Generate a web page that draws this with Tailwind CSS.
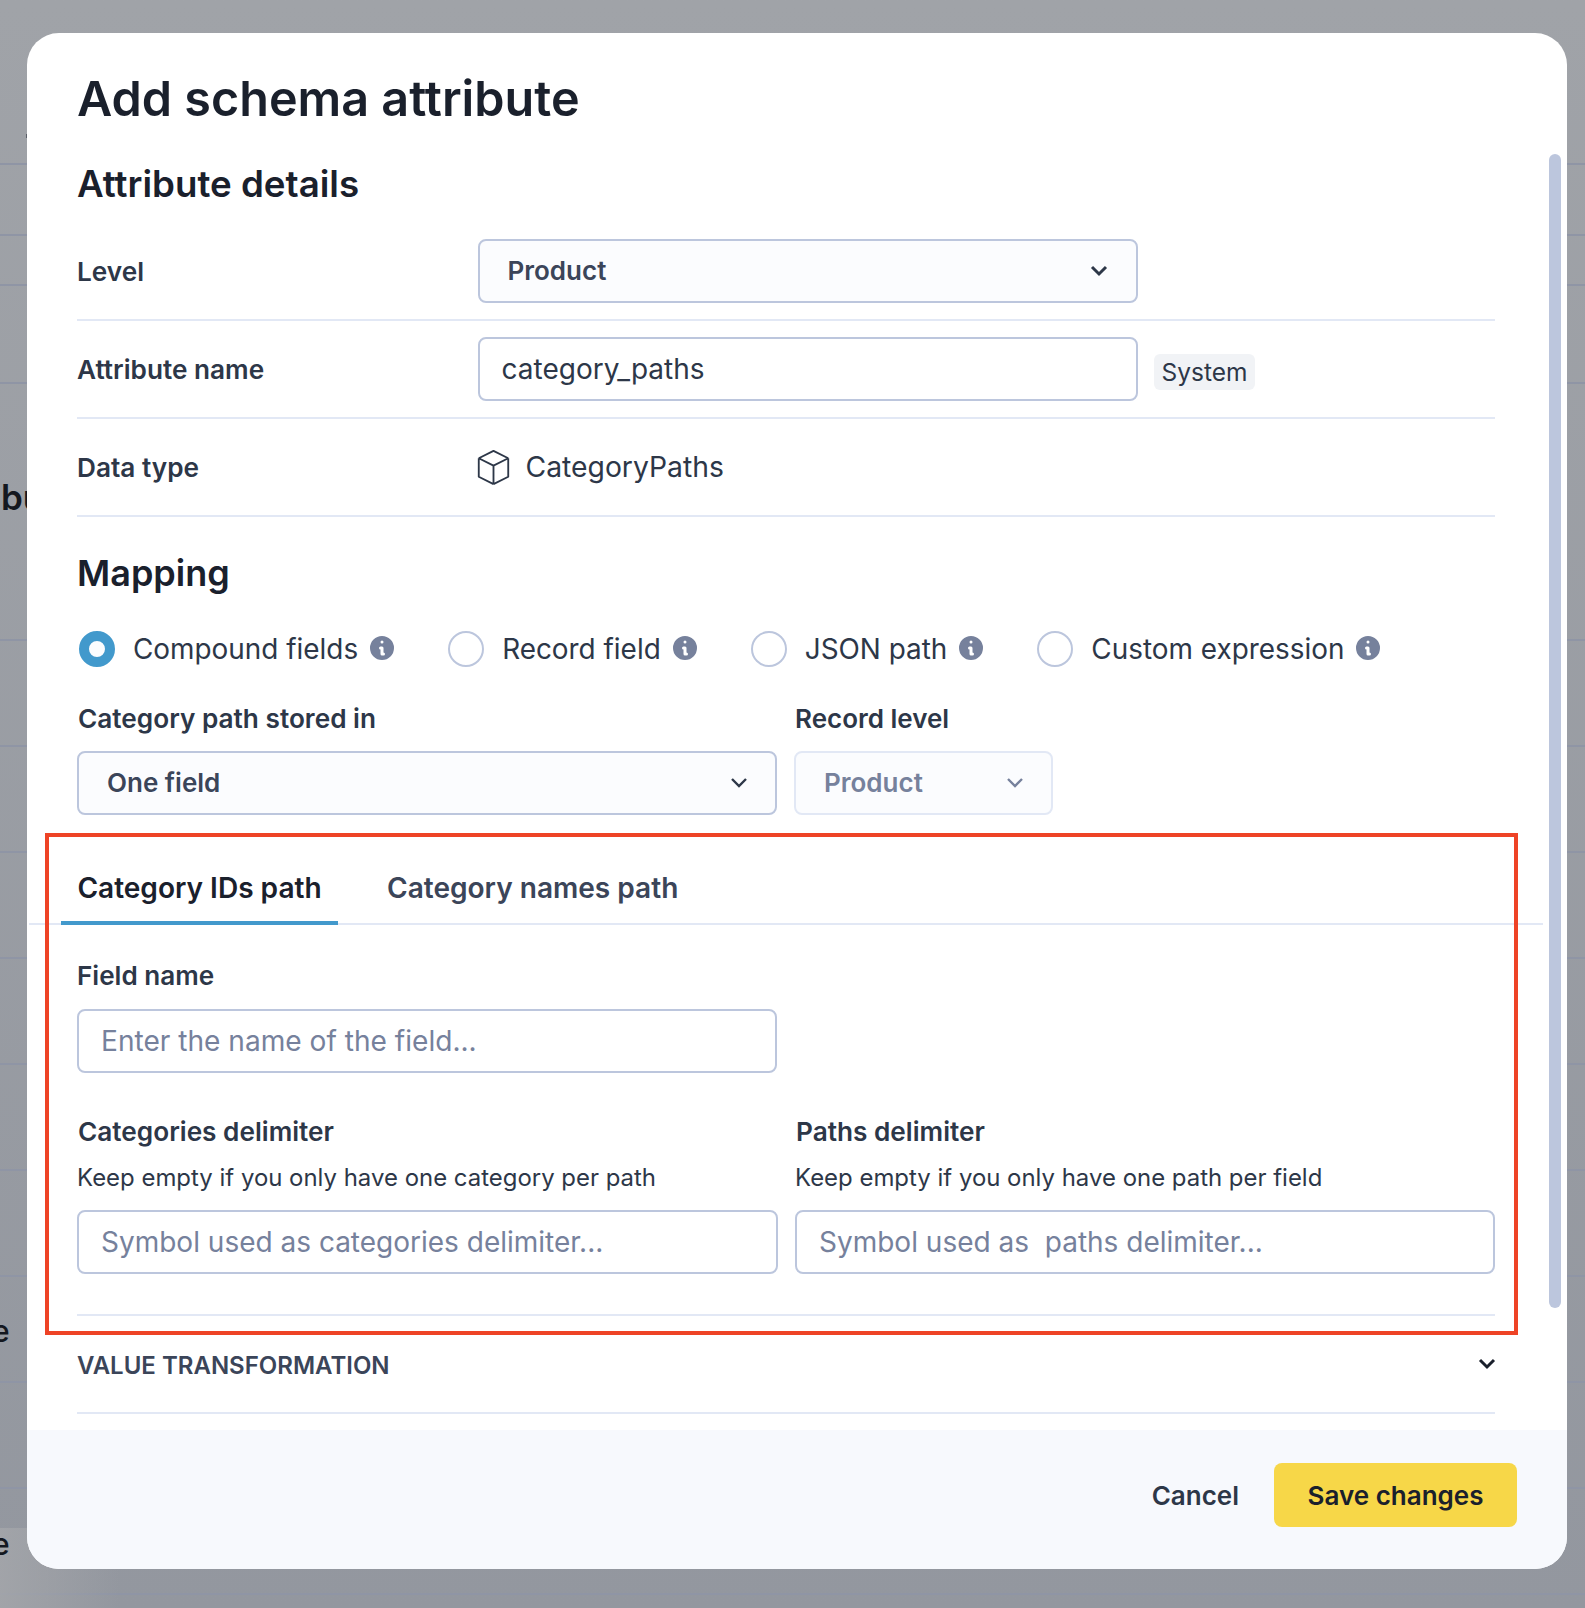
<!DOCTYPE html>
<html lang="en">
<head>
<meta charset="utf-8">
<title>Add schema attribute</title>
<script src="https://cdn.jsdelivr.net/npm/@tailwindcss/browser@4"></script>
</head>
<body class="m-0 bg-[#9ea1a7]">
<div class="relative w-[1585px] h-[1608px] overflow-hidden bg-gradient-to-b from-[#a0a3a8] to-[#93979f] font-['Inter',sans-serif]">
  <!-- page dimmed behind the dialog -->
  <div class="absolute inset-0">
    <div class="h-[165px] border-b-2 border-[#8f95a5]"></div>
    <div class="h-[71px] border-b-2 border-[#8f95a5]"></div>
    <div class="h-[50px] border-b-2 border-[#8f95a5]"></div>
    <div class="h-[98px] border-b-2 border-[#8f95a5]"></div>
    <div class="h-[257px] border-b-2 border-[#8f95a5]"></div>
    <div class="h-[106px] border-b-2 border-[#8f95a5]"></div>
    <div class="h-[106px] border-b-2 border-[#8f95a5]"></div>
    <div class="h-[106px] border-b-2 border-[#8f95a5]"></div>
    <div class="h-[106px] border-b-2 border-[#8f95a5]"></div>
    <div class="h-[106px] border-b-2 border-[#8f95a5]"></div>
    <div class="h-[106px] border-b-2 border-[#8f95a5]"></div>
    <div class="h-[106px] border-b-2 border-[#8f95a5]"></div>
    <div class="h-[106px] border-b-2 border-[#8f95a5]"></div>
    <div class="h-[106px] border-b-2 border-[#8f95a5]"></div>
  </div>
  <div class="absolute left-0 bottom-0 w-[120px] h-[80px] bg-gradient-to-r from-[#a5a7ab]/80 to-transparent"></div>
  <span class="absolute left-[26px] top-[134px] w-[1px] h-[4px] bg-[#5a5f68]"></span>
  <span class="absolute left-[1px] top-[476px] text-[35px] leading-[42px] font-semibold text-[#141820]">bu</span>
  <span class="absolute left-[-8px] top-[1313px] text-[30px] leading-[36px] font-medium text-[#141820]">e</span>
  <span class="absolute left-[-8px] top-[1526px] text-[30px] leading-[36px] font-medium text-[#141820]">e</span>

  <!-- dialog -->
  <div class="absolute left-[27px] top-[33px] w-[1540px] h-[1536px] rounded-[32px] bg-white overflow-hidden flex flex-col">
    <div class="h-[1397px] shrink-0 pl-[50px] pr-[72px]">
      <h1 class="mt-[38px] h-[56px] leading-[56px] text-[48.5px] font-semibold text-[#1a202c]">Add schema attribute</h1>
      <h2 class="mt-[37px] h-[40px] leading-[40px] text-[36.7px] font-semibold text-[#1a202c]">Attribute details</h2>

      <div class="mt-[19px]">
        <div class="h-[98px] box-border border-b-2 border-[#e2e8f5] flex items-center">
          <div class="w-[400.5px] shrink-0 pt-[2px] text-[26.2px] font-semibold text-[#2d3748]">Level</div>
          <button class="w-[660px] h-[64px] box-border pl-[28px] pr-[28px] flex items-center justify-between rounded-[8px] border-2 border-[#bcc6dd] bg-[#fbfcfe] text-[26px] font-semibold text-[#3b4559]">
            <span class="-mt-[2px]">Product</span>
            <svg class="w-[18px] h-[12px]" viewBox="0 0 18 12" fill="none" stroke="#2d3748" stroke-width="3"><path d="M2 2l7 7 7-7"/></svg>
          </button>
        </div>
        <div class="h-[98px] box-border border-b-2 border-[#e2e8f5] flex items-center">
          <div class="w-[400.5px] shrink-0 pt-[2px] text-[26.2px] font-semibold text-[#2d3748]">Attribute name</div>
          <input class="w-[660px] h-[64px] box-border px-[22px] rounded-[8px] border-2 border-[#bcc6dd] bg-white text-[28px] text-[#2d3748] outline-none" value="category_paths">
          <span class="ml-[16px] mt-[6px] h-[36px] leading-[36px] px-[8px] rounded-[6px] bg-[#f1f3f6] text-[24.5px] text-[#2d3748]">System</span>
        </div>
        <div class="h-[98px] box-border border-b-2 border-[#e2e8f5] flex items-center">
          <div class="w-[400.5px] shrink-0 pt-[2px] text-[26.2px] font-semibold text-[#2d3748]">Data type</div>
          <svg class="-ml-[2px] w-[35px] h-[35px] shrink-0" viewBox="3 2.5 18 19" fill="none" stroke="#2d3748" stroke-width="1" stroke-linejoin="round"><path d="M20 7l-8-4-8 4m16 0l-8 4m8-4v10l-8 4m0-10L4 7m8 4v10M4 7v10l8 4"/></svg>
          <span class="ml-[15px] text-[28.3px] text-[#2d3748]">CategoryPaths</span>
        </div>
      </div>

      <h2 class="mt-[36px] h-[40px] leading-[40px] text-[36px] font-semibold text-[#1a202c]">Mapping</h2>

      <div class="mt-[38px] ml-[2px] h-[36px] flex items-center">
        <span class="w-[36px] h-[36px] box-border rounded-full border-[10px] border-[#4299cc] bg-[#fbfcfe] shrink-0"></span>
        <span class="ml-[18px] pt-[2px] text-[27.9px] text-[#2d3748]">Compound fields</span>
        <svg class="ml-[12px] w-[24px] h-[24px] shrink-0 -mt-[2px]" viewBox="2 2 16 16" fill="#76819c"><path fill-rule="evenodd" d="M18 10a8 8 0 11-16 0 8 8 0 0116 0zm-7-4a1 1 0 11-2 0 1 1 0 012 0zM9 9a1 1 0 000 2v3a1 1 0 001 1h1a1 1 0 100-2v-3a1 1 0 00-1-1H9z"/></svg>
        <span class="ml-[54px] w-[36px] h-[36px] box-border rounded-full border-2 border-[#bcc6dd] bg-white shrink-0"></span>
        <span class="ml-[18px] pt-[2px] text-[27.9px] text-[#2d3748]">Record field</span>
        <svg class="ml-[12px] w-[24px] h-[24px] shrink-0 -mt-[2px]" viewBox="2 2 16 16" fill="#76819c"><path fill-rule="evenodd" d="M18 10a8 8 0 11-16 0 8 8 0 0116 0zm-7-4a1 1 0 11-2 0 1 1 0 012 0zM9 9a1 1 0 000 2v3a1 1 0 001 1h1a1 1 0 100-2v-3a1 1 0 00-1-1H9z"/></svg>
        <span class="ml-[54px] w-[36px] h-[36px] box-border rounded-full border-2 border-[#bcc6dd] bg-white shrink-0"></span>
        <span class="ml-[18px] pt-[2px] text-[27.9px] text-[#2d3748]">JSON path</span>
        <svg class="ml-[12px] w-[24px] h-[24px] shrink-0 -mt-[2px]" viewBox="2 2 16 16" fill="#76819c"><path fill-rule="evenodd" d="M18 10a8 8 0 11-16 0 8 8 0 0116 0zm-7-4a1 1 0 11-2 0 1 1 0 012 0zM9 9a1 1 0 000 2v3a1 1 0 001 1h1a1 1 0 100-2v-3a1 1 0 00-1-1H9z"/></svg>
        <span class="ml-[54px] w-[36px] h-[36px] box-border rounded-full border-2 border-[#bcc6dd] bg-white shrink-0"></span>
        <span class="ml-[18px] pt-[2px] text-[27.9px] text-[#2d3748]">Custom expression</span>
        <svg class="ml-[12px] w-[24px] h-[24px] shrink-0 -mt-[2px]" viewBox="2 2 16 16" fill="#76819c"><path fill-rule="evenodd" d="M18 10a8 8 0 11-16 0 8 8 0 0116 0zm-7-4a1 1 0 11-2 0 1 1 0 012 0zM9 9a1 1 0 000 2v3a1 1 0 001 1h1a1 1 0 100-2v-3a1 1 0 00-1-1H9z"/></svg>
      </div>

      <div class="mt-[32px] flex gap-[17px]">
        <div class="w-[700px] shrink-0">
          <div class="h-[40px] leading-[40px] ml-[1px] text-[26.2px] font-semibold text-[#2d3748]">Category path stored in</div>
          <button class="mt-[12px] w-[700px] h-[64px] box-border pl-[28px] pr-[27px] flex items-center justify-between rounded-[8px] border-2 border-[#bcc6dd] bg-[#fbfcfe] text-[26px] font-semibold text-[#3b4559]">
            <span class="-mt-[2px]">One field</span>
            <svg class="w-[18px] h-[12px]" viewBox="0 0 18 12" fill="none" stroke="#2d3748" stroke-width="2.4"><path d="M2 2l7 7 7-7"/></svg>
          </button>
        </div>
        <div class="w-[259px] shrink-0">
          <div class="h-[40px] leading-[40px] ml-[1px] text-[26px] font-semibold text-[#2d3748]">Record level</div>
          <button class="mt-[12px] w-[259px] h-[64px] box-border pl-[28px] pr-[27px] flex items-center justify-between rounded-[8px] border-2 border-[#e2e8f5] bg-[#fbfcfe] text-[26px] font-semibold text-[#76819c]">
            <span class="-mt-[2px]">Product</span>
            <svg class="w-[18px] h-[12px]" viewBox="0 0 18 12" fill="none" stroke="#76819c" stroke-width="2.4"><path d="M2 2l7 7 7-7"/></svg>
          </button>
        </div>
      </div>

      <!-- tabs -->
      <div class="mt-[55px] -ml-[48px] -mr-[48px] h-[53px] border-b-2 border-[#e2e8f5] flex box-content">
        <div class="ml-[32px] w-[277px] h-[55px] box-border border-b-[4px] border-[#4299cc] text-center text-[28.05px] leading-[36px] font-semibold text-[#1a202c]">Category IDs path</div>
        <div class="ml-[49px] text-[28.05px] leading-[36px] font-semibold text-[#3b4559]">Category names path</div>
      </div>

      <div class="mt-[31px] h-[40px] leading-[40px] text-[26.1px] font-semibold text-[#2d3748]">Field name</div>
      <input class="mt-[13px] block w-[700px] h-[64px] box-border px-[22px] rounded-[8px] border-2 border-[#bcc6dd] bg-white text-[28.1px] text-[#2d3748] placeholder:text-[#76819c] placeholder:opacity-100 outline-none" placeholder="Enter the name of the field...">

      <div class="mt-[39px] flex gap-[17px]">
        <div class="w-[701px] shrink-0">
          <div class="h-[40px] leading-[40px] ml-[1px] text-[26.2px] font-semibold text-[#2d3748]">Categories delimiter</div>
          <div class="mt-[6px] h-[40px] leading-[40px] text-[23.95px] text-[#2d3748]">Keep empty if you only have one category per path</div>
          <input class="mt-[12px] block w-[701px] h-[64px] box-border px-[22px] rounded-[8px] border-2 border-[#bcc6dd] bg-white text-[28px] text-[#2d3748] placeholder:text-[#76819c] placeholder:opacity-100 outline-none" placeholder="Symbol used as categories delimiter...">
        </div>
        <div class="w-[700px] shrink-0">
          <div class="h-[40px] leading-[40px] ml-[1px] text-[26.2px] font-semibold text-[#2d3748]">Paths delimiter</div>
          <div class="mt-[6px] h-[40px] leading-[40px] text-[23.95px] text-[#2d3748]">Keep empty if you only have one path per field</div>
          <input class="mt-[12px] block w-[700px] h-[64px] box-border px-[22px] rounded-[8px] border-2 border-[#bcc6dd] bg-white text-[28px] text-[#2d3748] placeholder:text-[#76819c] placeholder:opacity-100 outline-none" placeholder="Symbol used as&nbsp; paths delimiter...">
        </div>
      </div>

      <div class="mt-[40px] h-[100px] box-border border-y-2 border-[#e2e8f5] flex items-center justify-between">
        <span class="pt-[3px] text-[24px] font-semibold text-[#3b4559]">VALUE TRANSFORMATION</span>
        <svg class="-mr-[1px] w-[18px] h-[12px]" viewBox="0 0 18 12" fill="none" stroke="#1a202c" stroke-width="3"><path d="M2 2l7 7 7-7"/></svg>
      </div>
    </div>

    <div class="flex-1 bg-[#f7f9fd] flex items-center justify-end gap-[35px] pr-[50px] pb-[9px]">
      <button class="text-[26px] font-semibold text-[#2d3748]">Cancel</button>
      <button class="w-[243px] h-[64px] rounded-[8px] bg-[#f7d748] text-[26px] font-semibold text-[#1a202c]">Save changes</button>
    </div>

    <div class="absolute right-[6px] top-[121px] w-[12px] h-[1154px] rounded-full bg-[#bcc6dd]"></div>
  </div>

  <!-- annotation -->
  <div class="absolute left-[45px] top-[833px] w-[1473px] h-[502px] box-border border-[4px] border-[#ee4326]"></div>
</div>
</body>
</html>
